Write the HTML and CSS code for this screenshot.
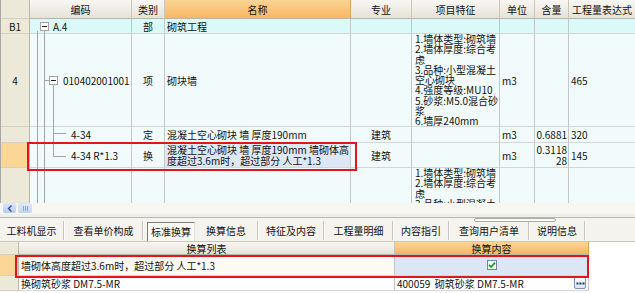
FILE: index.html
```html
<!DOCTYPE html>
<html lang="zh-CN">
<head>
  <meta charset="UTF-8" />
  <title>清单定额</title>
  <link rel="stylesheet" href="styles.css">
</head>
<body>
  <div class="grid-wrap">
    <div class="grid">
      <div class="hd rn"></div>
      <div class="hd">编码</div>
      <div class="hd">类别</div>
      <div class="hd hd-on">名称</div>
      <div class="hd">专业</div>
      <div class="hd">项目特征</div>
      <div class="hd">单位</div>
      <div class="hd">含量</div>
      <div class="hd">工程量表达式</div>

      <div class="rn">B1</div>
      <div class="b1 code1">A.4</div>
      <div class="b1 ctr">部</div>
      <div class="b1">砌筑工程</div>
      <div class="b1"></div>
      <div class="b1"></div>
      <div class="b1"></div>
      <div class="b1"></div>
      <div class="b1"></div>

      <div class="rn">4</div>
      <div class="code2">010402001001</div>
      <div class="ctr">项</div>
      <div>砌块墙</div>
      <div></div>
      <div class="feat">1.墙体类型:砌筑墙<br>2.墙体厚度:综合考<br>虑<br>3.品种:小型混凝土<br>空心砌块<br>4.强度等级:MU10<br>5.砂浆:M5.0混合砂<br>浆<br>6.墙厚240mm</div>
      <div>m3</div>
      <div></div>
      <div>465</div>

      <div class="rn"></div>
      <div class="code3">4-34</div>
      <div class="ctr">定</div>
      <div>混凝土空心砌块 墙 厚度190mm</div>
      <div class="ctr">建筑</div>
      <div></div>
      <div>m3</div>
      <div class="rt">0.6881</div>
      <div>320</div>

      <div class="rn on"></div>
      <div class="code3">4-34 R*1.3</div>
      <div class="ctr">换</div>
      <div class="sel"><span>混凝土空心砌块 墙 厚度190mm 墙砌体高<br>度超过3.6m时，超过部分 人工*1.3</span></div>
      <div class="ctr">建筑</div>
      <div></div>
      <div>m3</div>
      <div class="rt"><span>0.3118<br>28</span></div>
      <div>145</div>

      <div class="rn"></div>
      <div></div>
      <div></div>
      <div></div>
      <div></div>
      <div class="feat">1.墙体类型:砌筑墙<br>2.墙体厚度:综合考<br>虑<br>3.品种:小型混凝土</div>
      <div></div>
      <div></div>
      <div></div>
    </div>

    <svg class="tree" width="80" height="203" viewBox="0 0 80 203">
      <g stroke="#a4a4a4" stroke-width="1" fill="none">
        <line x1="37.5" y1="31" x2="37.5" y2="203" />
        <line x1="44.5" y1="31" x2="44.5" y2="203" />
        <line x1="44.5" y1="80.5" x2="49" y2="80.5" />
        <line x1="53.5" y1="85" x2="53.5" y2="156.5" />
        <line x1="53.5" y1="133.5" x2="66" y2="133.5" />
        <line x1="53.5" y1="156.5" x2="66" y2="156.5" />
        <rect x="40.5" y="22.5" width="8" height="8" fill="#fff" />
        <rect x="49.5" y="76.5" width="8" height="8" fill="#fff" />
      </g>
      <g stroke="#222" stroke-width="1">
        <line x1="42" y1="26.5" x2="47" y2="26.5" />
        <line x1="51" y1="80.5" x2="56" y2="80.5" />
      </g>
    </svg>
    <div class="mark mark-top"></div>
  </div>

  <div class="hscroll">
    <div class="sb-btn">
      <svg width="6" height="7" viewBox="0 0 6 7"><path d="M4.5 0.5 L1.5 3.5 L4.5 6.5" stroke="#2d4f9a" stroke-width="1.4" fill="none" /></svg>
    </div>
    <div class="sb-thumb"><i></i><i></i><i></i></div>
  </div>
  <div class="split"></div>

  <div class="tabs">
    <div class="tab w1">工料机显示</div><span class="sep"></span>
    <div class="tab w2">查看单价构成</div><span class="sep"></span>
    <div class="tab tab-on">标准换算</div>
    <div class="tab w4">换算信息</div><span class="sep"></span>
    <div class="tab w5">特征及内容</div><span class="sep"></span>
    <div class="tab w6">工程量明细</div><span class="sep"></span>
    <div class="tab w7">内容指引</div><span class="sep"></span>
    <div class="tab w8">查询用户清单</div><span class="sep"></span>
    <div class="tab w9">说明信息</div><span class="sep"></span>
    <div class="grip"></div>
  </div>

  <div class="bottom">
    <div class="bgrid">
      <div class="hd rn"></div>
      <div class="hd">换算列表</div>
      <div class="hd hd-on">换算内容</div>

      <div class="rn on"></div>
      <div class="cur">墙砌体高度超过3.6m时，超过部分 人工*1.3</div>
      <div class="sel ctr"><span class="check"><svg width="8" height="8" viewBox="0 0 8 8"><path d="M1 3.8 L3.1 6 L7 1.6" stroke="#18a328" stroke-width="1.8" fill="none" /></svg></span></div>

      <div class="rn"></div>
      <div>换砌筑砂浆 DM7.5-MR</div>
      <div class="mat">400059&nbsp;&nbsp;砌筑砂浆 DM7.5-MR<span class="dots"><svg width="9" height="3" viewBox="0 0 9 3"><g fill="#1d3568"><rect x="0.5" y="0.5" width="2" height="2" /><rect x="3.5" y="0.5" width="2" height="2" /><rect x="6.5" y="0.5" width="2" height="2" /></g></svg></span></div>
    </div>
    <div class="mark mark-bottom"></div>
  </div>
</body>
</html>
```

FILE: styles.css
```css
* {
  box-sizing: border-box;
}
body {
  margin: 0;
  width: 635px;
  height: 293px;
  overflow: hidden;
  background: #fff;
  font-family: "Noto Sans CJK SC", "Liberation Sans", sans-serif;
  font-size: 10px;
  color: #111;
}

/* upper grid */
.grid-wrap {
  position: relative;
  height: 203px;
  overflow: hidden;
  background: #f1fbfb;
  border-left: 1px solid #a8a8a8;
}
.grid {
  display: grid;
  grid-template-columns: 29px 102px 33px 186px 61px 88px 35px 34px 67px;
  grid-template-rows: 19px 15px 93px 16px 25px 40px;
}
.grid > div,
.bgrid > div {
  display: flex;
  align-items: center;
  padding-left: 2px;
  border-right: 1px solid #c6c6c6;
  border-bottom: 1px solid #d6d6d6;
  white-space: nowrap;
  overflow: hidden;
  line-height: 11px;
}
.grid > .hd,
.bgrid > .hd {
  justify-content: center;
  padding: 0;
  background: linear-gradient(#f8f7f3, #e5e2d7);
  border-bottom: 1px solid #b9b6aa;
  border-right: 1px solid #c9c6ba;
}
.grid > .hd-on,
.bgrid > .hd-on {
  background: linear-gradient(#fcd494, #f6b863);
  border-right: 1px solid #d9a55a;
}
.grid > .rn,
.bgrid > .rn {
  justify-content: center;
  padding: 0;
  background: #ece9d8;
  border-right: 1px solid #b9b6aa;
  border-bottom: 1px solid #d4d0c2;
}
.grid > .rn.on,
.bgrid > .rn.on {
  background: #fbd697;
}
.grid > .b1 {
  background: #dcf9f9;
}
.grid > .ctr,
.bgrid > .ctr {
  justify-content: center;
  padding: 0;
}
.grid > .rt {
  justify-content: flex-end;
  text-align: right;
  padding: 0 1px 0 0;
}
.grid > .code1 {
  padding-left: 23px;
}
.grid > .code2 {
  padding-left: 33px;
}
.grid > .code3 {
  padding-left: 41px;
}
.grid > .feat {
  align-items: flex-start;
  padding: 0 0 0 3px;
  line-height: 10.3px;
}
.grid > .feat:last-child {
  padding-top: 1px;
}
.grid > .sel {
  background: #dde7f5;
}
.tree {
  position: absolute;
  left: -1px;
  top: 0;
}
.mark {
  position: absolute;
  border: 2px solid #e3141b;
}
.mark-top {
  left: 26px;
  top: 142px;
  width: 330px;
  height: 29px;
}

/* horizontal scroll bar */
.hscroll {
  display: flex;
  gap: 2px;
  height: 11px;
  padding: 0 0 0 3px;
  background: #f6f6f3;
}
.sb-btn {
  display: flex;
  align-items: center;
  justify-content: center;
  width: 13px;
  height: 10px;
  border-radius: 2px;
  background: linear-gradient(#dce6f8, #b9cbee);
}
.sb-thumb {
  display: flex;
  align-items: center;
  justify-content: center;
  gap: 1px;
  width: 14px;
  height: 10px;
  border-radius: 2px;
  background: linear-gradient(#e0e9f8, #c5d4f0);
}
.sb-thumb i {
  width: 1px;
  height: 5px;
  background: #8ea6d6;
}
.split {
  height: 4px;
  background: #efefec;
  border-bottom: 1px solid #b7b7b3;
}

/* tabs */
.tabs {
  position: relative;
  display: flex;
  align-items: flex-end;
  height: 24px;
  background: #f4f3ee;
  border-bottom: 1px solid #c9c7bd;
}
.tab {
  display: flex;
  align-items: center;
  justify-content: center;
  height: 20px;
  padding-bottom: 1px;
  white-space: nowrap;
}
.sep {
  width: 2px;
  height: 19px;
  margin-bottom: 1px;
  border-left: 1px solid #c8c5b8;
  border-right: 1px solid #fff;
}
.w1 { width: 63px; }
.w2 { width: 77px; }
.w4 { width: 62px; }
.w5 { width: 64px; }
.w6 { width: 67px; }
.w7 { width: 54px; }
.w8 { width: 78px; }
.w9 { width: 54px; }
.tab-on {
  width: 48px;
  height: 19px;
  margin-left: 3px;
  background: #fbfaf6;
  border-left: 1px solid #7c7c7c;
  border-top: 1px solid #7c7c7c;
  border-right: 1px solid #e2e0d6;
}
.grip {
  position: absolute;
  left: 474px;
  top: 0;
  width: 82px;
  height: 4px;
  border: 1px solid #a9a9a5;
  border-radius: 2px;
  background: #fbfbfa;
}

/* lower grid */
.bottom {
  position: relative;
}
.bgrid {
  display: grid;
  grid-template-columns: 19px 376px 194px;
  grid-template-rows: 13px 21px 15px;
}
.bgrid > .hd {
  align-items: flex-end;
  line-height: 10px;
}
.bgrid > .cur {
  background: #fbfaf3;
}
.bgrid > .sel {
  background: #dce6f4;
}
.bgrid > .mat {
  position: relative;
  padding-left: 2px;
}
.check {
  display: flex;
  align-items: center;
  justify-content: center;
  width: 10px;
  height: 10px;
  background: #f4fbf4;
  border: 1px solid #6f86aa;
}
.dots {
  position: absolute;
  right: 2px;
  top: 1px;
  display: flex;
  align-items: flex-end;
  justify-content: center;
  width: 12px;
  height: 12px;
  padding-bottom: 3px;
  border: 1px solid #7d93bb;
  border-radius: 2px;
  background: linear-gradient(#fdfdfe, #dfe6f3);
}
.mark-bottom {
  left: 15px;
  top: 13px;
  width: 574px;
  height: 23px;
}
```
